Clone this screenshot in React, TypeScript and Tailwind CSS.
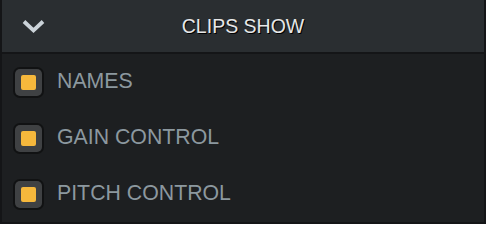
import React from "react";

const items = ["NAMES", "GAIN CONTROL", "PITCH CONTROL"];

function Check() {
  return (
    <div className="w-[31px] h-[31px] rounded-[7px] bg-[#111213] p-[2px] shrink-0">
      <div className="w-full h-full rounded-[5px] bg-[#3f4143] flex items-center justify-center">
        <div className="w-[15px] h-[15px] rounded-[2px] bg-[#f6b83c]" />
      </div>
    </div>
  );
}

export default function App() {
  return (
    <div
      className="w-[486px] h-[224px] bg-[#1d1f21] border-x-2 border-b-2 border-[#141517] flex flex-col overflow-hidden"
      style={{ fontFamily: '"Liberation Sans", Arial, sans-serif' }}
    >
      <div className="h-[54px] shrink-0 bg-[#2a2e31] border-b-2 border-[#141517] relative flex items-center justify-center">
        <svg
          className="absolute left-[19px] top-[18px]"
          width="25"
          height="16"
          viewBox="0 0 25 16"
        >
          <path
            d="M3 3.5 L12.5 12.5 L22 3.5"
            fill="none"
            stroke="#cbd3d9"
            strokeWidth="3.8"
            strokeLinecap="butt"
            strokeLinejoin="miter"
          />
        </svg>
        <span className="text-[19.5px] leading-none text-[#e6e7e8] [text-shadow:1px_1px_0_#000] mt-[1px]">
          CLIPS SHOW
        </span>
      </div>
      <div className="flex flex-col">
        {items.map((t) => (
          <div key={t} className="h-[56px] flex items-center pl-[11px] gap-[13px]">
            <Check />
            <span className="text-[21.3px] leading-none text-[#8c989f]">{t}</span>
          </div>
        ))}
      </div>
    </div>
  );
}
